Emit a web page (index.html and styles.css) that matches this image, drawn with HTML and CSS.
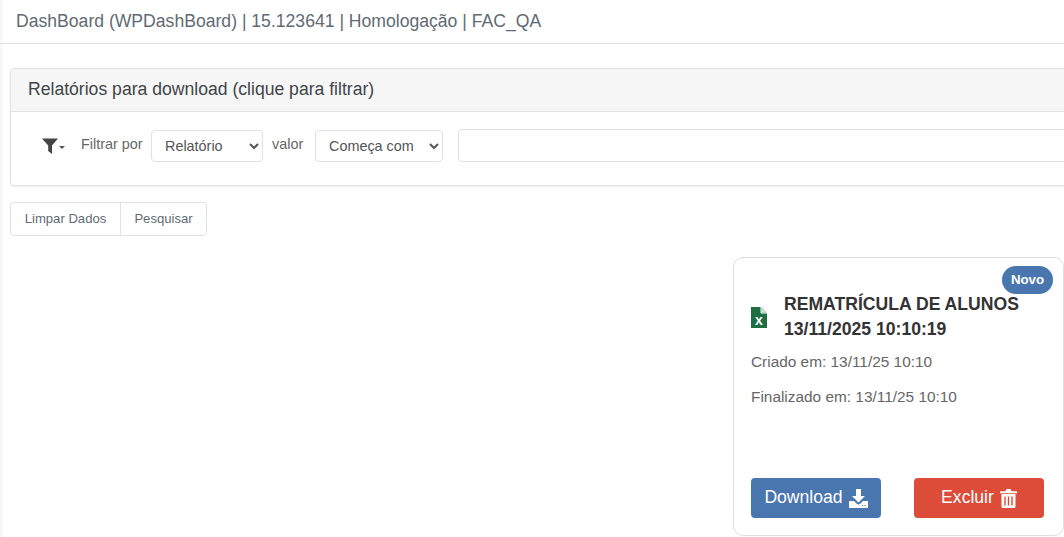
FILE: index.html
```html
<!DOCTYPE html>
<html lang="pt-BR">
<head>
<meta charset="utf-8">
<title>DashBoard</title>
<link rel="stylesheet" href="styles.css">
</head>
<body>
<div class="page">
  <header class="topbar">DashBoard (WPDashBoard) | 15.123641 | Homologação | FAC_QA</header>
  <main class="content">
    <section class="panel">
      <div class="panel-heading">Relatórios para download (clique para filtrar)</div>
      <div class="panel-body">
        <span class="filter-icon">
          <svg width="16" height="16" viewBox="0 0 16 16"><path d="M0 0.500h16L10 7.500V16L6.200 13V7.500z" fill="#444"/></svg>
          <i class="caret"></i>
        </span>
        <label class="lbl lbl-filter">Filtrar por</label>
        <select class="sel sel-a"><option>Relatório</option></select>
        <label class="lbl lbl-valor">valor</label>
        <select class="sel sel-b"><option>Começa com</option></select>
        <input class="search" type="text">
      </div>
    </section>
    <div class="btn-group">
      <button class="gbtn gbtn-a">Limpar Dados</button>
      <button class="gbtn gbtn-b">Pesquisar</button>
    </div>
    <div class="cards">
      <article class="card">
        <span class="badge">Novo</span>
        <div class="card-title">
          <svg class="xls" width="16" height="21" viewBox="0 0 16 21">
            <path d="M0 0h10l6 6v15H0z" fill="#1d6f42"/>
            <path d="M10.500 0.500l5 5h-5z" fill="#cfe6da"/>
            <path d="M10 0v6h6" fill="none" stroke="#fff" stroke-width="1"/>
            <text x="8" y="18" text-anchor="middle" class="xls-x">x</text>
          </svg>
          <h3>REMATRÍCULA DE ALUNOS<br>13/11/2025 10:10:19</h3>
        </div>
        <p class="meta">Criado em: 13/11/25 10:10</p>
        <p class="meta">Finalizado em: 13/11/25 10:10</p>
        <div class="actions">
          <a class="act act-blue"><span class="act-label">Download</span>
            <svg width="19" height="19" viewBox="0 0 19 19"><path d="M7 0h5v7h4l-6.500 6.500L3 7h4z" fill="#fff"/><path d="M0 12h5l2.500 2.500a3 3 0 0 0 4 0L14 12h5v7H0z" fill="#fff"/><path d="M13 16.500h1.200M15.500 16.500h1.200" stroke="#4a76b0" stroke-width="1"/></svg>
          </a>
          <a class="act act-red"><span class="act-label">Excluir</span>
            <svg width="17" height="19" viewBox="0 0 17 19"><path d="M5.500 2.200L6.500 0h4l1 2.200H17v2H0v-2z" fill="#fff"/><path d="M1.500 5h14v12.500a1.500 1.500 0 0 1-1.500 1.500H3a1.500 1.500 0 0 1-1.500-1.500z" fill="#fff"/><path d="M5 7.500v9M8.500 7.500v9M12 7.500v9" stroke="#dd4b39" stroke-width="1.400"/></svg>
          </a>
        </div>
      </article>
    </div>
  </main>
</div>
</body>
</html>
```
FILE: styles.css
```css
* { box-sizing: border-box; }
html, body { margin: 0; height: 100%; overflow: hidden; background: #fff; }
body { font-family: "Liberation Sans", Arial, sans-serif; color: #555; }
.page { width: 1064px; height: 537px; overflow: hidden; box-shadow: inset 4px 0 4px -3px rgba(0,0,0,.06); }
.topbar { height: 44px; padding: 11px 16px 0; font-size: 17.6px; line-height: 20px; color: #5f6b73; border-bottom: 1px solid #dde1e3; }
.content { padding: 24px 0 0 10px; }
.panel { width: 1100px; height: 118px; border: 1px solid #dfe2e4; border-radius: 4px; box-shadow: 0 1px 2px rgba(0,0,0,.08); }
.panel-heading { height: 43px; padding: 9px 17px 0; font-size: 17.6px; line-height: 22px; color: #3f4549; background: #f6f6f6; border-bottom: 1px solid #dfe2e4; border-radius: 4px 4px 0 0; }
.panel-body { display: flex; align-items: flex-start; padding-top: 17px; }
.filter-icon { display: flex; flex: none; align-items: center; margin: 9px 0 0 31px; width: 24px; }
.caret { width: 0; height: 0; margin: 3px 0 0 1px; border-left: 3.500px solid transparent; border-right: 3.500px solid transparent; border-top: 3.500px solid #555; }
.lbl { flex: none; font-size: 14.4px; line-height: 20px; color: #666; margin-top: 5px; }
.lbl-filter { margin-left: 15px; width: 70px; }
.lbl-valor { margin-left: 9px; width: 43px; }
.sel { flex: none; height: 32px; margin-top: 1px; padding: 0 0 0 9px; font: 14.4px "Liberation Sans", Arial, sans-serif; color: #555; background: #fff; border: 1px solid #dfe2e4; border-radius: 4px; }
.sel-a { width: 112px; }
.sel-b { width: 128px; }
.search { flex: none; width: 700px; height: 33px; margin-left: 15px; border: 1px solid #dfe2e4; border-radius: 4px; }
.btn-group { display: flex; margin-top: 16px; width: 197px; height: 34px; }
.gbtn { font: 13.1px "Liberation Sans", Arial, sans-serif; color: #5f6b73; background: #fff; border: 1px solid #dfe2e4; padding: 0 0 2px; height: 34px; }
.gbtn-a { width: 111px; border-radius: 4px 0 0 4px; }
.gbtn-b { width: 87px; margin-left: -1px; border-radius: 0 4px 4px 0; }
.cards { display: flex; justify-content: flex-end; margin-top: 21px; padding-right: 0; }
.card { position: relative; width: 331px; height: 279px; padding: 34px 17px 0; border: 1px solid #dedede; border-radius: 10px; }
.badge { position: absolute; top: 8px; right: 10px; width: 51px; height: 28px; font-size: 13.3px; font-weight: 700; line-height: 27px; text-align: center; color: #fff; background: #4a76b0; border-radius: 14px; }
.card-title { display: flex; align-items: center; }
.xls { margin-top: 1px; flex: none; }
.xls-x { font: 700 14px "Liberation Sans", Arial, sans-serif; fill: #fff; }
.card-title h3 { margin: 0 0 0 17px; font-size: 17.6px; line-height: 25px; font-weight: 700; color: #333; }
.meta { margin: 0 0 15px; font-size: 15.4px; line-height: 20px; color: #666; }
.card-title + .meta { margin-top: 10px; }
.actions { display: flex; justify-content: space-between; margin-top: 71px; width: 293px; }
.act { display: flex; align-items: center; justify-content: center; gap: 6px; width: 130px; height: 40px; font-size: 17.6px; color: #fff; border-radius: 4px; }
.act-label { margin-bottom: 2px; }
.act-blue { background: #4a76b0; }
.act-red { background: #dd4b39; }
```
